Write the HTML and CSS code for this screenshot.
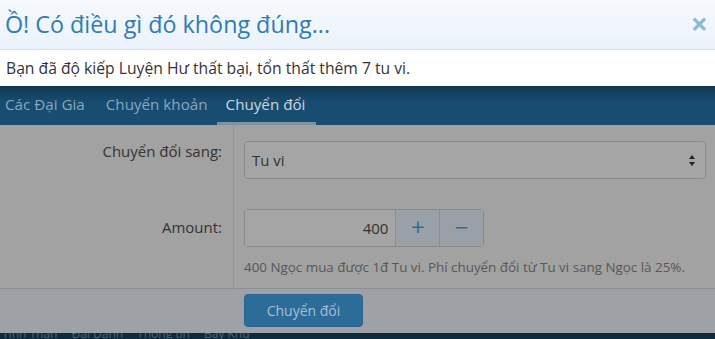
FILE: index.html
```html
<!DOCTYPE html>
<html>
<head lang="vi">
    <meta charset="UTF-8">
    <title>Chuyển đổi</title>
    <link rel="stylesheet" href="styles.css">
</head>
<body>
<div class="alert">
    <div class="alert-head">
        <h2>Ồ! Có điều gì đó không đúng...</h2>
        <span class="close">&times;</span>
    </div>
    <div class="alert-body">Bạn đã độ kiếp Luyện Hư thất bại, tổn thất thêm 7 tu vi.</div>
</div>
<ul class="tabs">
    <li>Các Đại Gia</li>
    <li>Chuyển khoản</li>
    <li class="current">Chuyển đổi</li>
</ul>
<div class="panel">
    <div class="row">
        <label>Chuyển đổi sang:</label>
        <div class="field">
            <div class="select">Tu vi<span class="arrows"></span></div>
        </div>
    </div>
    <div class="row row-amount">
        <label>Amount:</label>
        <div class="field">
            <div class="group">
                <div class="input">400</div>
                <span class="btn-sm">+</span>
                <span class="btn-sm">&minus;</span>
            </div>
            <p class="help">400 Ngọc mua được 1đ Tu vi. Phí chuyển đổi từ Tu vi sang Ngọc là 25%.</p>
        </div>
    </div>
</div>
<div class="footer">
    <span class="btn">Chuyển đổi</span>
</div>
<div class="strip">
    <span>Tinh Thần</span><span>Đại Danh</span><span>Thông tin</span><span>Bảy Khủ</span>
</div>
</body>
</html>
```
FILE: styles.css
```css
* {
    padding: 0;
    margin: 0;
    list-style: none;
    box-sizing: border-box;
}

body {
    width: 715px;
    height: 339px;
    overflow: hidden;
    font-family: "Open Sans", "Noto Sans", sans-serif;
    background: #a2a2a2;
}

.alert-head {
    height: 50px;
    display: flex;
    align-items: center;
    justify-content: space-between;
    padding: 0 7px 2px 5px;
    background: linear-gradient(#f6f9fd, #eaf3fb);
    border-bottom: 1px solid #d6dde3;
}

.alert-head h2 {
    font-weight: normal;
    font-size: 23.3px;
    color: #2e7cb4;
}

.close {
    font-size: 30px;
    line-height: 1;
    font-weight: bold;
    color: #8bbad9;
}

.alert-body {
    height: 36px;
    line-height: 36px;
    padding-left: 6px;
    font-size: 15.7px;
    color: #333;
    background: #fff;
}

.tabs {
    height: 39px;
    display: flex;
    padding-left: 0;
    background: linear-gradient(#133751, #174c70 40%, #184e73);
}

.tabs li {
    padding: 0 5px 0 5px;
    margin-right: 11px;
    font-size: 15.2px;
    line-height: 36px;
    color: #8aa6bb;
    border-bottom: 3px solid transparent;
}

.tabs li.current {
    margin-left: -7px;
    padding: 0 11px 0 9px;
    color: #cdd6dd;
    border-bottom-color: #7c93a4;
}

.panel {
    height: 164px;
    background: #a2a2a2;
    border-bottom: 1px solid #8d8f92;
}

.row {
    display: grid;
    grid-template-columns: 234px 1fr;
}

.row label {
    padding: 16px 11px 0 0;
    text-align: right;
    font-size: 15px;
    color: #333;
    border-right: 1px solid #979797;
    height: 84px;
}

.row-amount label {
    padding-top: 8px;
    height: 80px;
}

.field {
    padding: 16px 9px 0 10px;
}

.row-amount .field {
    padding-top: 0;
}

.select {
    height: 38px;
    display: flex;
    align-items: center;
    justify-content: space-between;
    padding: 0 9px 0 7px;
    font-size: 15px;
    color: #333;
    border: 1px solid #8a8a8a;
    border-radius: 4px;
    background: #a5a5a5;
}

.arrows {
    width: 7px;
    height: 11px;
    position: relative;
}

.arrows::before,
.arrows::after {
    content: "";
    position: absolute;
    left: 0;
    border-left: 3.5px solid transparent;
    border-right: 3.5px solid transparent;
}

.arrows::before {
    top: 0;
    border-bottom: 4px solid #222;
}

.arrows::after {
    bottom: 0;
    border-top: 4px solid #222;
}

.group {
    width: 240px;
    height: 38px;
    display: flex;
    border: 1px solid #8a8a8a;
    border-radius: 4px;
    overflow: hidden;
}

.input {
    width: 151px;
    padding-right: 7px;
    text-align: right;
    line-height: 36px;
    font-size: 15px;
    color: #333;
    background: #a5a5a5;
}

.btn-sm {
    width: 44px;
    text-align: center;
    line-height: 34px;
    font-size: 24px;
    color: #2b6d9d;
    background: #9aa0a8;
    border-left: 1px solid #8a8e94;
}

.help {
    margin-top: 11px;
    font-size: 13.4px;
    color: #575757;
}

.footer {
    height: 44px;
    padding: 5px 0 0 244px;
    background: #9ea1a6;
}

.btn {
    display: inline-block;
    width: 119px;
    height: 33px;
    line-height: 32px;
    text-align: center;
    font-size: 14px;
    color: #a9bfd0;
    background: #2b6c99;
    border: 1px solid #2a6490;
    border-radius: 4px;
}

.strip {
    height: 6px;
    overflow: hidden;
    background: #0f2a3d;
    font-size: 12px;
    line-height: 2px;
    color: #506272;
    padding-left: 2px;
}

.strip span {
    margin-right: 14px;
}
```
